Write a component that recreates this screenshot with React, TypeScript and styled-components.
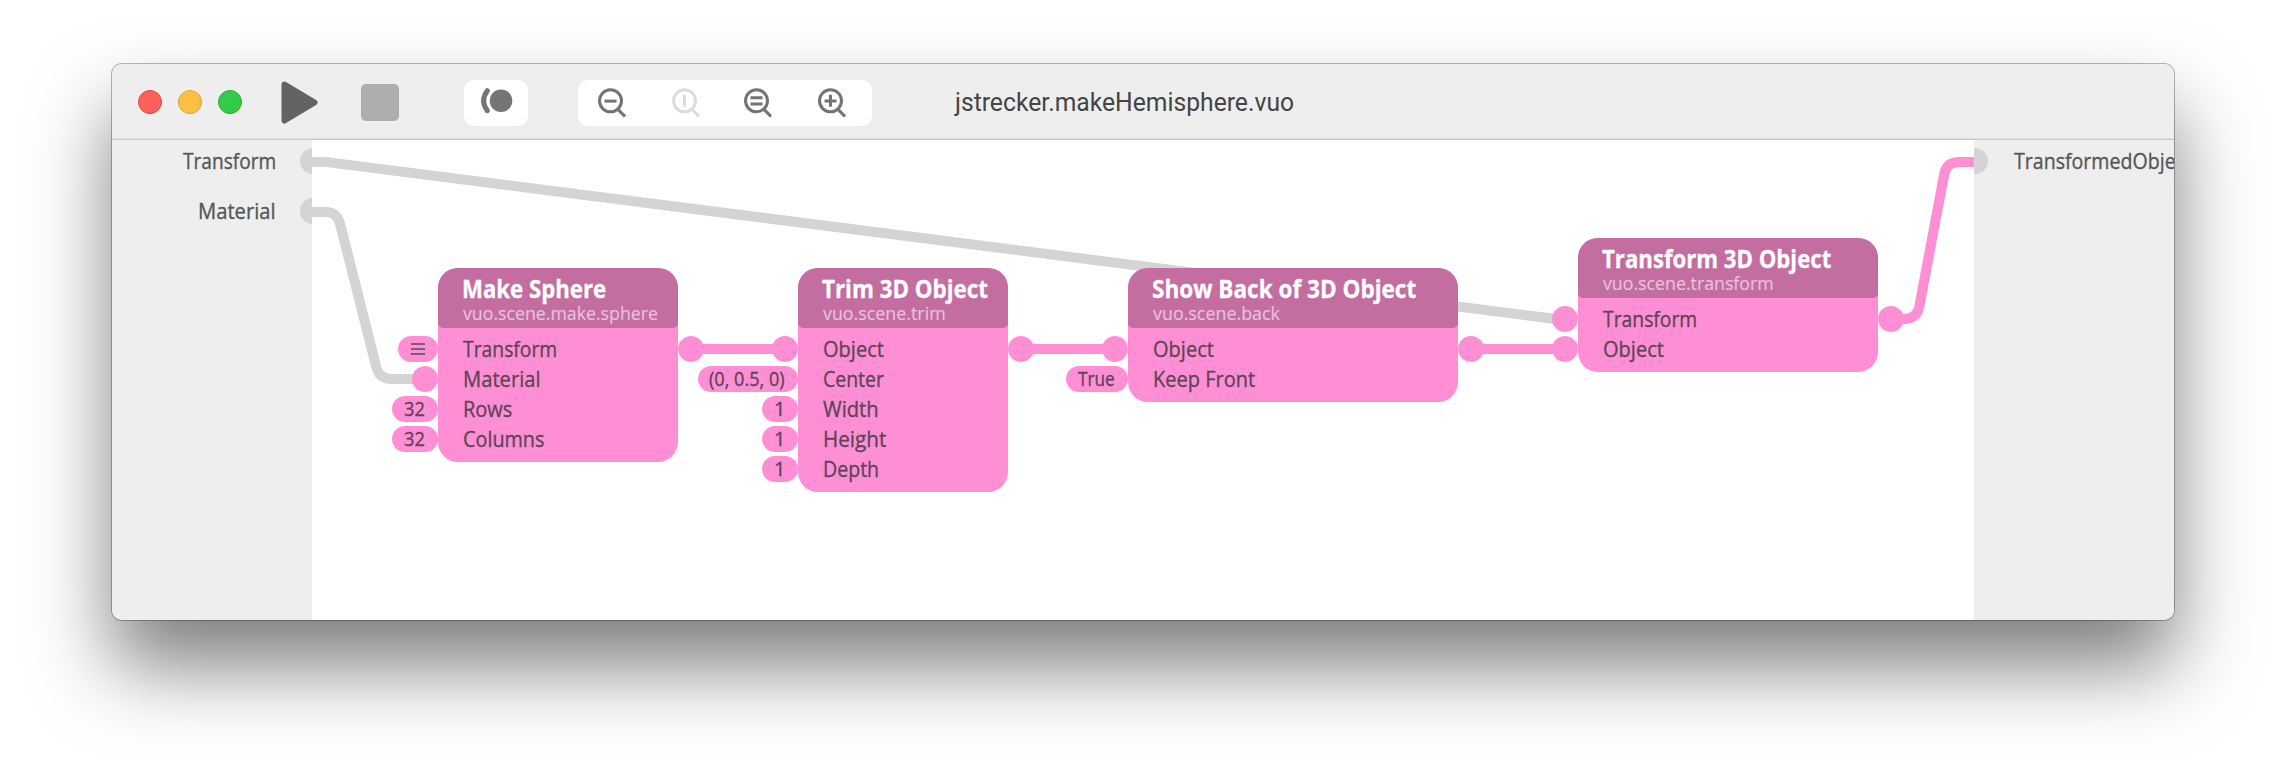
import React, { useLayoutEffect, useRef, useState } from 'react';
import styled, { createGlobalStyle } from 'styled-components';

const PINK = '#ff8fd5';
const PLUM = '#c46da1';
const GREY = '#d4d4d4';
const INK = '#5f4457';

const GlobalStyle = createGlobalStyle`
  html, body { margin: 0; padding: 0; background: #fff; }
  * { box-sizing: border-box; }
`;

const Desktop = styled.main`
  width: 2286px;
  height: 780px;
  padding: 64px 112px 160px;
  overflow: hidden;
  background: #fff;
  font-family: 'Open Sans', 'Noto Sans', sans-serif;
`;

const Window = styled.section`
  display: flex;
  flex-direction: column;
  width: 2062px;
  height: 556px;
  border-radius: 10px;
  box-shadow: 0 0 0 1px rgba(0, 0, 0, 0.28), 0 46px 80px rgba(0, 0, 0, 0.51);
`;

const TitleBar = styled.header`
  display: flex;
  align-items: flex-start;
  height: 76px;
  padding-left: 26px;
  background: #eeeeee;
  border-radius: 10px 10px 0 0;
  box-shadow: inset 0 -1px 0 #c6c6c6, inset 0 -2px 0 #e0e0e0;
`;

const Lights = styled.div`
  display: flex;
  gap: 16px;
  margin-top: 26px;
`;

const Light = styled.span<{ $fill: string; $edge: string }>`
  width: 24px;
  height: 24px;
  border-radius: 50%;
  background: ${(p) => p.$fill};
  border: 1px solid ${(p) => p.$edge};
`;

const PlayIcon = styled.svg`
  width: 38px;
  height: 44px;
  margin: 16px 0 0 38px;
`;

const StopButton = styled.span`
  width: 38px;
  height: 37px;
  margin: 20px 0 0 43px;
  border-radius: 5px;
  background: #aeaeae;
`;

const ToolGroup = styled.div<{ $width: number; $gap: number }>`
  width: ${(p) => p.$width}px;
  height: 46px;
  margin: 16px 0 0 ${(p) => p.$gap}px;
  border-radius: 10px;
  background: #fff;
`;

const GroupIcons = styled.svg`
  display: block;
  width: 100%;
  height: 100%;
`;

const Title = styled.h1`
  margin: 21px 0 0 83px;
  font: 400 26px/34px Roboto, sans-serif;
  color: #444;
`;

const Body = styled.div`
  display: flex;
  height: 480px;
`;

const SidePanel = styled.aside<{ $side: 'left' | 'right' }>`
  width: 200px;
  padding-top: 6px;
  overflow: hidden;
  background: #eeeeee;
  border-radius: ${(p) => (p.$side === 'left' ? '0 0 0 10px' : '0 0 10px 0')};
`;

const PublishedPort = styled.div<{ $side: 'left' | 'right' }>`
  display: flex;
  align-items: center;
  justify-content: ${(p) => (p.$side === 'left' ? 'flex-end' : 'flex-start')};
  gap: ${(p) => (p.$side === 'left' ? 24 : 26)}px;
  height: 30px;
  margin-bottom: 20px;
  font-size: 22px;
  line-height: 28px;
  color: #575757;
  -webkit-text-stroke: 0.35px currentColor;
`;

const PortLabel = styled.span`
  height: 30px;
`;

const PortEnd = styled.span<{ $side: 'left' | 'right' }>`
  flex: none;
  width: ${(p) => (p.$side === 'left' ? 12 : 14)}px;
  height: 26px;
  overflow: hidden;
  background: radial-gradient(
    circle at ${(p) => (p.$side === 'left' ? 13 : 1)}px 13px,
    ${GREY} 12.6px,
    transparent 13.4px
  );
`;

const Canvas = styled.div`
  position: relative;
  width: 1662px;
  background: #fff;
`;

const Cables = styled.svg`
  position: absolute;
  inset: 0;
  width: 1662px;
  height: 480px;
`;

const NodeBox = styled.article<{ $x: number; $y: number; $width: number }>`
  position: absolute;
  left: ${(p) => p.$x}px;
  top: ${(p) => p.$y}px;
  width: ${(p) => p.$width}px;
  padding-bottom: 8px;
  border-radius: 20px;
  background: ${PINK};
`;

const NodeHeader = styled.header`
  height: 60px;
  padding: 8px 0 0 24px;
  border-radius: 20px 20px 5px 5px;
  background: ${PLUM};
`;

const NodeTitle = styled.h2`
  margin: 0;
  font-size: 24.5px;
  font-weight: 700;
  line-height: 26px;
  color: #fff;
  -webkit-text-stroke: 0.3px currentColor;
`;

const NodeClass = styled.p`
  margin: 0;
  padding-left: 1px;
  font-size: 19px;
  line-height: 22px;
  color: #e8c1da;
  -webkit-text-stroke: 0.2px currentColor;
`;

const Ports = styled.div`
  padding-top: 6px;
`;

const PortRow = styled.div`
  position: relative;
  height: 30px;
  padding-left: 24.5px;
  font-size: 22px;
  line-height: 28px;
  color: ${INK};
  -webkit-text-stroke: 0.35px currentColor;
`;

const Pill = styled.span<{ $width: number }>`
  position: absolute;
  right: 100%;
  top: 2px;
  display: flex;
  align-items: center;
  justify-content: flex-end;
  width: ${(p) => p.$width}px;
  height: 26px;
  padding-right: 13px;
  border-radius: 13px;
  background: ${PINK};
  font-size: 20px;
  line-height: 26px;
`;

const OutPort = styled.span`
  position: absolute;
  left: 100%;
  top: 2px;
  width: 26px;
  height: 26px;
  border-radius: 13px;
  background: ${PINK};
`;

const FitBox = styled.span<{ $width: number }>`
  display: block;
  flex: none;
  width: ${(p) => p.$width}px;
  white-space: nowrap;
`;

const FitInner = styled.span`
  display: inline-block;
  vertical-align: top;
  transform-origin: 0 50%;
`;

/** Condenses a label horizontally so that it fills exactly the given width. */
function Fit({ width, children }: { width: number; children: string }) {
  const ref = useRef<HTMLSpanElement>(null);
  const [scale, setScale] = useState(1);
  useLayoutEffect(() => {
    if (ref.current) setScale(width / ref.current.offsetWidth);
  }, [width, children]);
  return (
    <FitBox $width={width}>
      <FitInner ref={ref} style={{ transform: `scaleX(${scale})` }}>{children}</FitInner>
    </FitBox>
  );
}

type Port = {
  label: string;
  width: number;
  pill: number;
  value?: string;
  valueWidth?: number;
  list?: boolean;
  out?: boolean;
};

type NodeData = {
  x: number;
  y: number;
  width: number;
  title: string;
  titleWidth: number;
  cls: string;
  clsWidth: number;
  ports: Port[];
};

const nodes: NodeData[] = [
  {
    x: 126, y: 128, width: 240,
    title: 'Make Sphere', titleWidth: 144, cls: 'vuo.scene.make.sphere', clsWidth: 195,
    ports: [
      { label: 'Transform', width: 94, pill: 40, list: true, out: true },
      { label: 'Material', width: 78, pill: 26 },
      { label: 'Rows', width: 49, pill: 46, value: '32', valueWidth: 21 },
      { label: 'Columns', width: 81, pill: 46, value: '32', valueWidth: 21 },
    ],
  },
  {
    x: 486, y: 128, width: 210,
    title: 'Trim 3D Object', titleWidth: 166, cls: 'vuo.scene.trim', clsWidth: 123,
    ports: [
      { label: 'Object', width: 61, pill: 26, out: true },
      { label: 'Center', width: 61, pill: 100, value: '(0, 0.5, 0)', valueWidth: 76 },
      { label: 'Width', width: 56, pill: 36, value: '1', valueWidth: 11 },
      { label: 'Height', width: 63, pill: 36, value: '1', valueWidth: 11 },
      { label: 'Depth', width: 56, pill: 36, value: '1', valueWidth: 11 },
    ],
  },
  {
    x: 816, y: 128, width: 330,
    title: 'Show Back of 3D Object', titleWidth: 264, cls: 'vuo.scene.back', clsWidth: 127,
    ports: [
      { label: 'Object', width: 61, pill: 26, out: true },
      { label: 'Keep Front', width: 102, pill: 62, value: 'True', valueWidth: 37 },
    ],
  },
  {
    x: 1266, y: 98, width: 300,
    title: 'Transform 3D Object', titleWidth: 229, cls: 'vuo.scene.transform', clsWidth: 171,
    ports: [
      { label: 'Transform', width: 94, pill: 26, out: true },
      { label: 'Object', width: 61, pill: 26 },
    ],
  },
];

function Node({ data }: { data: NodeData }) {
  return (
    <NodeBox $x={data.x} $y={data.y} $width={data.width}>
      <NodeHeader>
        <NodeTitle><Fit width={data.titleWidth}>{data.title}</Fit></NodeTitle>
        <NodeClass><Fit width={data.clsWidth}>{data.cls}</Fit></NodeClass>
      </NodeHeader>
      <Ports>
        {data.ports.map((p) => (
          <PortRow key={p.label}>
            <Pill $width={p.pill}>
              {p.value && <Fit width={p.valueWidth ?? 20}>{p.value}</Fit>}
              {p.list && (
                <svg width="14" height="12" viewBox="0 0 14 12" stroke={INK} strokeWidth="1.5">
                  <path d="M0 1H14M0 6H14M0 11H14" />
                </svg>
              )}
            </Pill>
            <Fit width={p.width}>{p.label}</Fit>
            {p.out && <OutPort />}
          </PortRow>
        ))}
      </Ports>
    </NodeBox>
  );
}

function Magnifier({ x, color, mark }: { x: number; color: string; mark: string }) {
  return (
    <g transform={`translate(${x} 20.8)`} fill="none" stroke={color} strokeWidth="3">
      <circle r="11" />
      <path d="M7.5 8.5L14.5 15.7" strokeWidth="3.2" />
      <path d={mark} />
    </g>
  );
}

export default function App() {
  return (
    <Desktop>
      <GlobalStyle />
      <Window>
        <TitleBar>
          <Lights>
            <Light $fill="#fe605b" $edge="#e2463f" />
            <Light $fill="#ffbf42" $edge="#dfa133" />
            <Light $fill="#33cb48" $edge="#24b02f" />
          </Lights>
          <PlayIcon viewBox="0 0 38 44">
            <path
              d="M4.5 4.5L34.5 22.5L4.5 40.5Z"
              fill="#636363"
              stroke="#636363"
              strokeWidth="6"
              strokeLinejoin="round"
            />
          </PlayIcon>
          <StopButton />
          <ToolGroup $width={64} $gap={65}>
            <GroupIcons viewBox="0 0 64 46">
              <circle cx="37" cy="20.7" r="11.3" fill="#757575" />
              <path d="M23.3 10.7Q16 20.7 23.3 30.7" fill="none" stroke="#757575" strokeWidth="5" strokeLinecap="round" />
            </GroupIcons>
          </ToolGroup>
          <ToolGroup $width={294} $gap={50}>
            <GroupIcons viewBox="0 0 294 46">
              <Magnifier x={32.5} color="#737373" mark="M-6 .3H6" />
              <Magnifier x={106.5} color="#dcdcdc" mark="M0 -6V6" />
              <Magnifier x={178.5} color="#737373" mark="M-6 -3H6M-6 3.2H6" />
              <Magnifier x={252.5} color="#737373" mark="M-6 .3H6M0 -6V6" />
            </GroupIcons>
          </ToolGroup>
          <Title><Fit width={339}>jstrecker.makeHemisphere.vuo</Fit></Title>
        </TitleBar>
        <Body>
          <SidePanel $side="left">
            <PublishedPort $side="left">
              <PortLabel><Fit width={93}>Transform</Fit></PortLabel>
              <PortEnd $side="left" />
            </PublishedPort>
            <PublishedPort $side="left">
              <PortLabel><Fit width={78}>Material</Fit></PortLabel>
              <PortEnd $side="left" />
            </PublishedPort>
          </SidePanel>
          <Canvas>
            <Cables viewBox="312 140 1662 480" fill="none" strokeWidth="10">
              <g stroke={GREY}>
                <path d="M312 162H323Q329 162 335 163.1L1544 317.5Q1552 319 1565 319" />
                <path d="M312 212H326Q336.5 212 340 223.5L376.5 368Q380 379 391 379H425" />
              </g>
              <g stroke={PINK}>
                <path d="M691 349H785M1021 349H1115M1471 349H1565" />
                <path d="M1891 319H1905Q1917.5 318 1919.3 306.5L1944.3 173.5Q1947 162 1959 162H1974" />
              </g>
            </Cables>
            {nodes.map((n) => <Node key={n.title} data={n} />)}
          </Canvas>
          <SidePanel $side="right">
            <PublishedPort $side="right">
              <PortEnd $side="right" />
              <PortLabel><Fit width={178}>TransformedObject</Fit></PortLabel>
            </PublishedPort>
          </SidePanel>
        </Body>
      </Window>
    </Desktop>
  );
}
